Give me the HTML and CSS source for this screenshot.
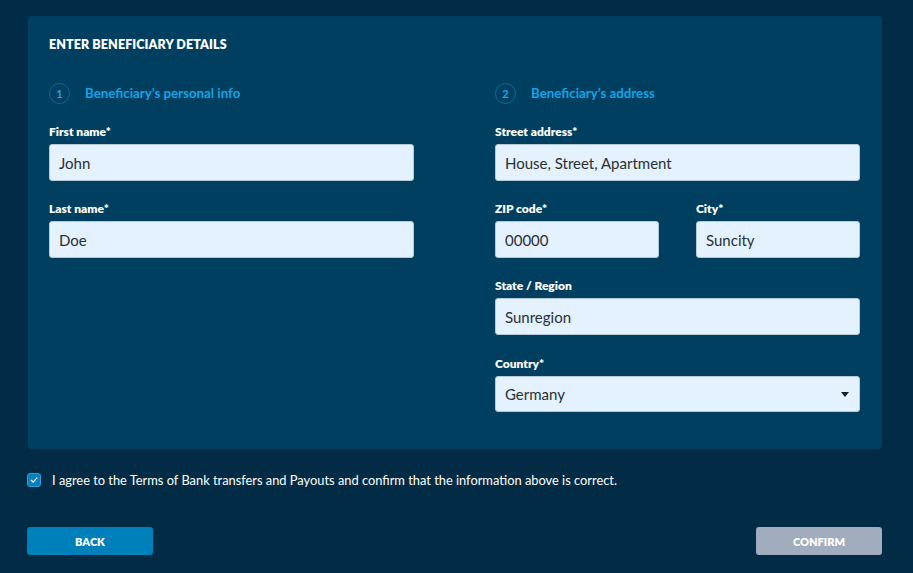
FILE: index.html
```html
<!DOCTYPE html>
<html>
<head>
<meta charset="utf-8">
<link rel="stylesheet" href="styles.css">
</head>
<body>
<div class="page">
  <div class="card">
    <h1 class="title">ENTER BENEFICIARY DETAILS</h1>
    <div class="cols">
      <div class="col">
        <div class="step"><span class="num">1</span><span class="step-text">Beneficiary’s personal info</span></div>
        <div class="field">
          <label class="lbl">First name*</label>
          <div class="input">John</div>
        </div>
        <div class="field">
          <label class="lbl">Last name*</label>
          <div class="input">Doe</div>
        </div>
      </div>
      <div class="col">
        <div class="step"><span class="num">2</span><span class="step-text">Beneficiary’s address</span></div>
        <div class="field">
          <label class="lbl">Street address*</label>
          <div class="input">House, Street, Apartment</div>
        </div>
        <div class="row2">
          <div class="field">
            <label class="lbl">ZIP code*</label>
            <div class="input">00000</div>
          </div>
          <div class="field">
            <label class="lbl">City*</label>
            <div class="input">Suncity</div>
          </div>
        </div>
        <div class="field">
          <label class="lbl">State / Region</label>
          <div class="input">Sunregion</div>
        </div>
        <div class="field field-select">
          <label class="lbl">Country*</label>
          <div class="input select"><span>Germany</span><span class="caret"></span></div>
        </div>
      </div>
    </div>
  </div>
  <div class="agree">
    <span class="check"><svg width="10" height="10" viewBox="0 0 10 10"><path d="M2.2 5.2 L4.2 7.1 L7.9 2.9" fill="none" stroke="#fff" stroke-width="1.2" stroke-linecap="round" stroke-linejoin="round"/></svg></span>
    <span class="agree-text">I agree to the Terms of Bank transfers and Payouts and confirm that the information above is correct.</span>
  </div>
  <div class="actions">
    <button class="btn back">BACK</button>
    <button class="btn confirm">CONFIRM</button>
  </div>
</div>
</body>
</html>
```
FILE: styles.css
```css
* { box-sizing: border-box; }
html, body { margin: 0; padding: 0; }
body {
  background: #022c45;
  font-family: "Lato", "Noto Sans", sans-serif;
  width: 913px;
  height: 573px;
  overflow: hidden;
}
.page {
  padding: 16px 31px 0 27px;
}
.card {
  margin-left: 1px;
  background: #003f5f;
  border-radius: 4px;
  padding: 22px 21px 38px 21px;
  height: 433px;
}
.title {
  margin: 0;
  color: #fff;
  font-size: 12.5px;
  font-weight: 800;
  line-height: 14px;
  letter-spacing: 0.1px;
}
.cols {
  display: flex;
  gap: 81px;
  margin-top: 30px;
}
.col {
  width: 365px;
  display: flex;
  flex-direction: column;
}
.step {
  display: flex;
  align-items: center;
  height: 22px;
  margin-bottom: 21px;
}
.num {
  width: 21px;
  height: 21px;
  border: 1px solid #0d6c9b;
  border-radius: 50%;
  color: #1aa7e6;
  font-size: 11px;
  font-weight: 700;
  display: flex;
  align-items: center;
  justify-content: center;
}
.step-text {
  margin-left: 15px;
  color: #11a5e6;
  font-size: 13.3px;
  font-weight: 700;
}
.field {
  display: flex;
  flex-direction: column;
  margin-bottom: 21px;
}
.field-select { margin-top: 1px; }
.lbl {
  color: #fff;
  font-size: 12px;
  font-weight: 800;
  line-height: 13px;
  height: 13px;
  margin-bottom: 6px;
}
.input {
  height: 37px;
  background: #e3f2fe;
  border: 1px solid #b5c9d9;
  border-radius: 3px;
  color: #2a2f35;
  font-size: 15px;
  padding: 0 9px;
  display: flex;
  align-items: center;
}
.row2 {
  display: flex;
  gap: 37px;
}
.row2 .field { flex: 1; }
.select {
  height: 36px;
  justify-content: space-between;
}
.caret {
  width: 0;
  height: 0;
  border-left: 4.5px solid transparent;
  border-right: 4.5px solid transparent;
  border-top: 5px solid #1b1f23;
  margin-right: 1px;
}
.agree {
  display: flex;
  align-items: center;
  margin-top: 23px;
  height: 15px;
}
.check {
  width: 14px;
  height: 14px;
  background: #0a7fbd;
  border: 1px solid #2c9bd6;
  border-radius: 3px;
  display: flex;
  align-items: center;
  justify-content: center;
}
.agree-text {
  margin-left: 11px;
  color: #fff;
  font-size: 12.85px;
}
.actions {
  display: flex;
  justify-content: space-between;
  margin-top: 40px;
}
.btn {
  width: 126px;
  height: 28px;
  border: none;
  border-radius: 3px;
  color: #fff;
  font-family: inherit;
  font-size: 11px;
  font-weight: 800;
}
.back { background: #0080ba; }
.confirm { background: #a1adbd; }
```
